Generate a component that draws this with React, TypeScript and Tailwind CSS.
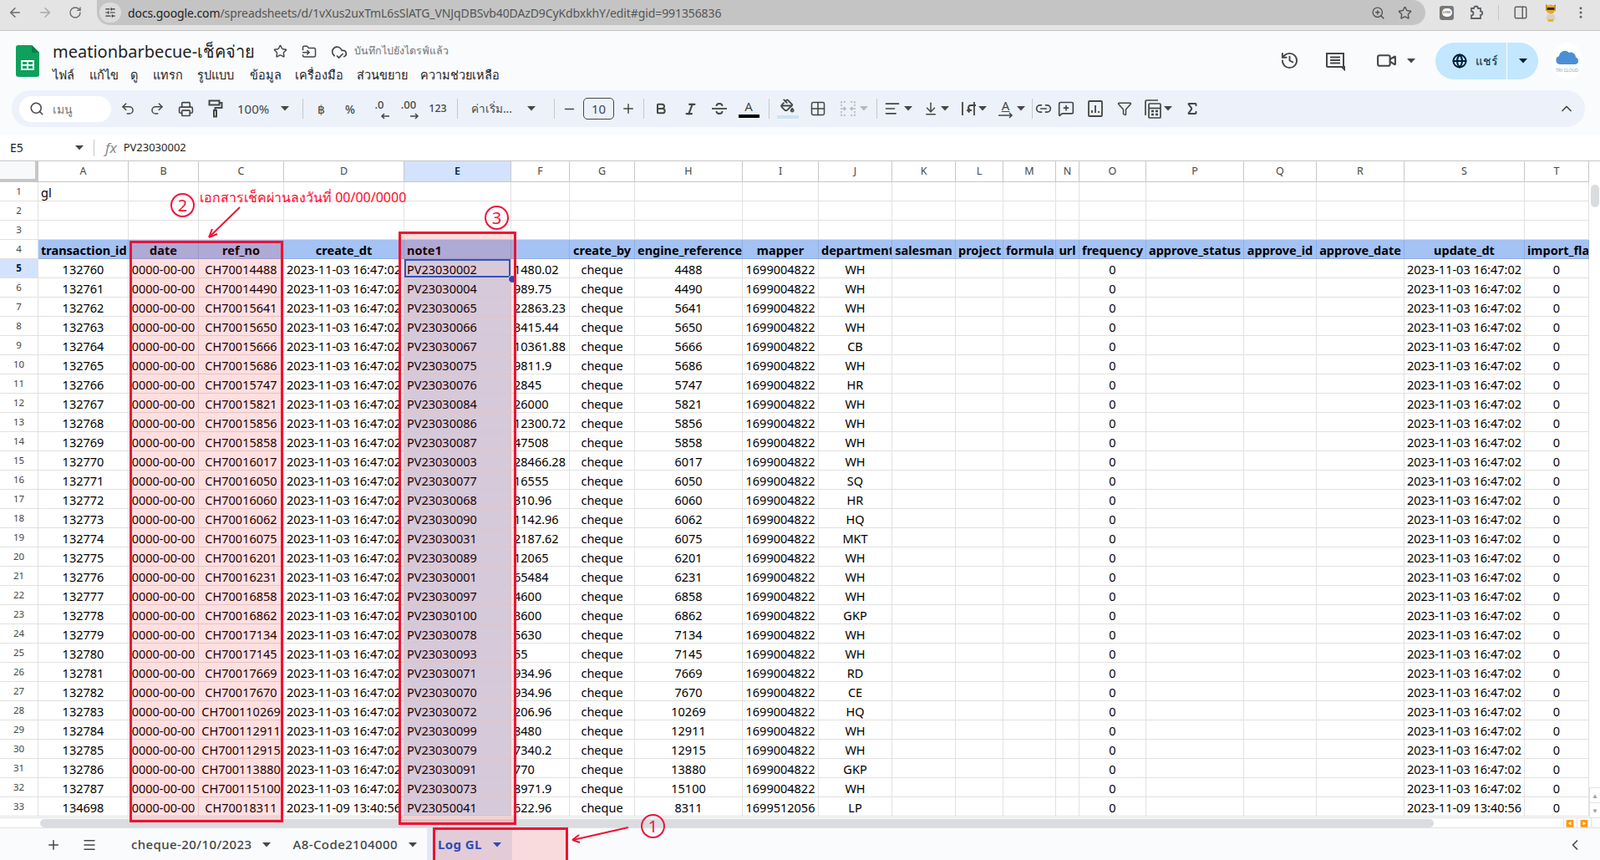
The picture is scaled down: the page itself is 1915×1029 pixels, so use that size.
import type { ReactNode } from 'react'
import {
  ArrowLeft, ArrowRight, RotateCw, SlidersHorizontal, ZoomIn, Star, PanelRight, MoreVertical,
  Search, Undo2, Redo2, Printer, Bold, Italic, PaintBucket, Grid2x2, AlignLeft, ArrowDownToLine,
  Link2, MessageSquarePlus, Filter, Sigma, ChevronUp, ChevronLeft, Minus, Plus, Menu, History,
  FolderInput, CloudCheck, Video, Globe,
} from 'lucide-react'

const columns = ['A','B','C','D','E','F','G','H','I','J','K','L','M','N','O','P','Q','R','S','T']

const headers = ['transaction_id','date','ref_no','create_dt','note1','','create_by','engine_reference','mapper','department','salesman','project','formula','url','frequency','approve_status','approve_id','approve_date','update_dt','import_fla']

// id ref note amount engine dept
const raw = `132760 CH70014488 PV23030002 1480.02 4488 WH
132761 CH70014490 PV23030004 989.75 4490 WH
132762 CH70015641 PV23030065 22863.23 5641 WH
132763 CH70015650 PV23030066 3415.44 5650 WH
132764 CH70015666 PV23030067 10361.88 5666 CB
132765 CH70015686 PV23030075 9811.9 5686 WH
132766 CH70015747 PV23030076 2845 5747 HR
132767 CH70015821 PV23030084 26000 5821 WH
132768 CH70015856 PV23030086 12300.72 5856 WH
132769 CH70015858 PV23030087 47508 5858 WH
132770 CH70016017 PV23030003 28466.28 6017 WH
132771 CH70016050 PV23030077 16555 6050 SQ
132772 CH70016060 PV23030068 310.96 6060 HR
132773 CH70016062 PV23030090 1142.96 6062 HQ
132774 CH70016075 PV23030031 2187.62 6075 MKT
132775 CH70016201 PV23030089 12065 6201 WH
132776 CH70016231 PV23030001 65484 6231 WH
132777 CH70016858 PV23030097 4600 6858 WH
132778 CH70016862 PV23030100 3600 6862 GKP
132779 CH70017134 PV23030078 5630 7134 WH
132780 CH70017145 PV23030093 55 7145 WH
132781 CH70017669 PV23030071 934.96 7669 RD
132782 CH70017670 PV23030070 934.96 7670 CE
132783 CH700110269 PV23030072 206.96 10269 HQ
132784 CH700112911 PV23030099 8480 12911 WH
132785 CH700112915 PV23030079 7340.2 12915 WH
132786 CH700113880 PV23030091 770 13880 GKP
132787 CH700115100 PV23030073 8971.9 15100 WH
134698 CH70018311 PV23050041 622.96 8311 LP`

const rows = raw.split('\n').map((line) => {
  const [id, ref, note, amount, engine, dept] = line.split(' ')
  const last = id === '134698'
  const stamp = last ? '2023-11-09 13:40:56' : '2023-11-03 16:47:02'
  return [id, '0000-00-00', ref, stamp, note, amount, 'cheque', engine, last ? '1699512056' : '1699004822', dept, '', '', '', '', '0', '', '', '', stamp, '0']
})

function Caret({ className = 'text-[#444746]' }: { className?: string }) {
  return (
    <svg width="10" height="6" viewBox="0 0 10 6" className={className}>
      <path d="M0 0h10L5 5.5z" fill="currentColor" />
    </svg>
  )
}

function Btn({ children, className = 'w-[35px]' }: { children: ReactNode; className?: string }) {
  return <div className={`flex h-full shrink-0 items-center justify-center text-[#444746] ${className}`}>{children}</div>
}

function Sep({ className = '' }: { className?: string }) {
  return <div className={`h-[24px] w-px shrink-0 bg-[#c7c7c7] ${className}`} />
}

function SheetsLogo() {
  return (
    <svg width="28" height="38" viewBox="0 0 28 38">
      <path d="M3 0h16l9 9v26a3 3 0 0 1-3 3H3a3 3 0 0 1-3-3V3a3 3 0 0 1 3-3z" fill="#0fa05c" />
      <path d="M19 0l9 9h-9z" fill="#0a7d45" />
      <path d="M6 18h16v12H6z M8 20v3h5v-3z M15 20v3h5v-3z M8 25v3h5v-3z M15 25v3h5v-3z" fill="#fff" fillRule="evenodd" />
    </svg>
  )
}

function Roller() {
  return (
    <svg width="18" height="22" viewBox="0 0 18 22" fill="none" stroke="currentColor" strokeWidth="2">
      <path d="M1.5 1.500h12v5h-12z" />
      <path d="M13.500 4h3v6h-8v3" />
      <path d="M7 13h3v7.500H7z" />
    </svg>
  )
}

function ZeroArrow({ label, dir }: { label: string; dir: 'l' | 'r' }) {
  return (
    <div className="relative flex h-[26px] w-[26px] flex-col items-center font-['Roboto',sans-serif] text-[13px] leading-[17px] font-medium">
      <span>{label}</span>
      <svg width="12" height="8" viewBox="0 0 12 8" className="absolute bottom-0 right-0" fill="none" stroke="currentColor" strokeWidth="1.500">
        {dir === 'l' ? <path d="M11 4H2M5 1 2 4l3 3" /> : <path d="M1 4h9M7 1l3 3-3 3" />}
      </svg>
    </div>
  )
}

function Strike() {
  return (
    <svg width="20" height="20" viewBox="0 0 20 20" fill="none" stroke="currentColor" strokeWidth="1.800">
      <path d="M1 10h18" />
      <path d="M6.500 7c0-2 1.500-3 3.500-3s3.500 1 3.500 3" />
      <path d="M6.500 13c0 2 1.500 3 3.500 3s3.500-1 3.500-3" />
    </svg>
  )
}

function MergeIcon() {
  return (
    <svg width="20" height="20" viewBox="0 0 20 20" fill="none" stroke="#b4b8bd" strokeWidth="1.600">
      <path d="M7 2H2v5M13 2h5v5M7 18H2v-5M13 18h5v-5" strokeDasharray="2.500 1.500" />
      <path d="M1 10h6M5 8l2 2-2 2M19 10h-6M15 8l-2 2 2 2" />
    </svg>
  )
}

function WrapIcon() {
  return (
    <svg width="18" height="20" viewBox="0 0 18 20" fill="none" stroke="currentColor" strokeWidth="1.800">
      <path d="M2 2v16M16 2v16" />
      <path d="M16 7h-6a3 3 0 0 0 0 6h1M8.500 10.500l-2.500 2.500 2.500 2.500" transform="translate(2 -1)" />
    </svg>
  )
}

function RotateIcon() {
  return (
    <div className="relative h-[24px] w-[20px] font-['Roboto',sans-serif] text-[15px] leading-[16px]">
      <span className="block text-center underline underline-offset-1">A</span>
      <svg width="20" height="8" viewBox="0 0 20 8" className="absolute bottom-0 left-0" fill="none" stroke="currentColor" strokeWidth="1.600">
        <path d="M1 4h16M14 1l3 3-3 3" />
      </svg>
    </div>
  )
}

function ChartIcon() {
  return (
    <svg width="18" height="20" viewBox="0 0 18 20" fill="none" stroke="currentColor" strokeWidth="1.800">
      <rect x="1" y="1" width="16" height="18" rx="1" />
      <path d="M5 15v-3M9 15V6M13 15v-2" />
    </svg>
  )
}

function CalcIcon() {
  return (
    <svg width="20" height="23" viewBox="0 0 20 23" fill="none" stroke="currentColor" strokeWidth="1.700">
      <path d="M1 19V2.500A1.500 1.500 0 0 1 2.500 1H16" />
      <rect x="5" y="5" width="14" height="17" rx="1" />
      <path d="M5 10.500h14" />
      <path d="M8 14h3M13 14h3M8 18h3M13 18h3" strokeWidth="2.400" />
    </svg>
  )
}

function LineApp() {
  return (
    <div className="flex h-[17px] w-[17px] items-center justify-center rounded-[3px] bg-[#777]">
      <div className="flex h-[10px] w-[12px] items-center justify-center rounded-[5px] bg-white text-[4px] leading-none font-bold text-[#777]">LINE</div>
    </div>
  )
}

function Puzzle() {
  return (
    <svg width="18" height="20" viewBox="0 0 18 20" fill="none" stroke="#5f6368" strokeWidth="1.800">
      <path d="M3 5h3a2.500 2.500 0 0 1 5 0h3v3.500a2.200 2.200 0 0 1 0 4.500V17H3v-3.500a2.200 2.200 0 0 0 0-5z" />
    </svg>
  )
}

function Mascot() {
  return (
    <svg width="18" height="24" viewBox="0 0 18 24">
      <path d="M3 2l3 2h6l3-2v8H3z" fill="#c78a1e" />
      <circle cx="9" cy="8" r="5.500" fill="#e0a93a" />
      <rect x="4.500" y="6" width="9" height="3" fill="#3c2c20" />
      <path d="M5 14h8l2 6H3z" fill="#d9d2c0" />
      <path d="M5 20h8l-1 3H6z" fill="#e7b52a" />
    </svg>
  )
}

function TriCloud() {
  return (
    <div className="flex h-[44px] w-[36px] items-center justify-center rounded-full bg-white">
      <svg width="30" height="32" viewBox="0 0 30 32">
        <path d="M6 20a5 5 0 0 1-1-9.800A7 7 0 0 1 17 6a6 6 0 0 1 8 5.500A4.500 4.500 0 0 1 25 20z" fill="#4a8fd6" />
        <text x="1" y="29" fontSize="5" fill="#8a9fb8" fontFamily="Liberation Sans">TRI CLOUD</text>
      </svg>
    </div>
  )
}

function Annotation({ n, className }: { n: number; className: string }) {
  return (
    <div className={`absolute flex h-[29px] w-[29px] items-center justify-center rounded-full border-2 border-[#f0143c] font-['Roboto',sans-serif] text-[20px] leading-none text-[#f0143c] ${className}`}>
      {n}
    </div>
  )
}

function ChromeBar() {
  return (
    <div className="flex h-[37px] items-start border-b border-[#c4c4c4] bg-[#e4e4e4] pt-0">
      <div className="flex h-[30px] w-[116px] items-center text-[#6b6b6b]">
        <ArrowLeft size={18} className="ml-[9px]" />
        <ArrowRight size={18} className="ml-[18px] text-[#a9a9a9]" />
        <RotateCw size={16} className="ml-[19px]" />
      </div>
      <div className="flex h-[30px] w-[1590px] items-center rounded-r-[15px] rounded-bl-[15px] bg-[#c4c4c4]">
        <div className="ml-[3px] flex h-[24px] w-[26px] items-center justify-center rounded-full bg-[#dcdcdc]">
          <SlidersHorizontal size={14} className="text-[#333]" />
        </div>
        <div className="ml-[8px] font-['Noto_Sans',sans-serif] text-[14px] tracking-[-0.1px] whitespace-nowrap text-[#555]">
          <span className="text-[#222]">docs.google.com</span>/spreadsheets/d/1vXus2uxTmL6sSlATG_VNJqDBSvb40DAzD9CyKdbxkhY/edit#gid=991356836
        </div>
        <div className="ml-auto flex items-center text-[#555]">
          <ZoomIn size={17} />
          <Star size={17} className="mr-[16px] ml-[15px]" />
        </div>
      </div>
      <div className="flex h-[30px] flex-1 items-center">
        <div className="ml-[17px]"><LineApp /></div>
        <div className="ml-[18px]"><Puzzle /></div>
        <div className="ml-[17px] h-[18px] w-px bg-[#c8c8c8]" />
        <PanelRight size={18} className="ml-[17px] text-[#5f6368]" />
        <div className="ml-[18px]"><Mascot /></div>
        <MoreVertical size={18} className="ml-[18px] text-[#5f6368]" />
      </div>
    </div>
  )
}

function AppHeader() {
  const menu = [
    ['ไฟล์', 'w-[44px]'], ['แก้ไข', 'w-[49px]'], ['ดู', 'w-[27px]'], ['แทรก', 'w-[53px]'], ['รูปแบบ', 'w-[63px]'],
    ['ข้อมูล', 'w-[54px]'], ['เครื่องมือ', 'w-[74px]'], ['ส่วนขยาย', 'w-[76px]'], ['ความช่วยเหลือ', 'w-[100px]'],
  ]
  return (
    <div className="flex h-[71px] bg-[#f9fbfd]">
      <div className="mt-[17px] ml-[19px]"><SheetsLogo /></div>
      <div className="ml-[16px] flex flex-col">
        <div className="mt-[11px] flex h-[27px] items-center">
          <span className="font-['Noto_Sans',sans-serif] text-[20px] leading-none whitespace-nowrap text-[#1f1f1f]">meationbarbecue-เช็คจ่าย</span>
          <Star size={17} className="ml-[22px] text-[#444746]" />
          <FolderInput size={18} className="ml-[17px] text-[#444746]" />
          <CloudCheck size={20} className="ml-[17px] text-[#444746]" />
          <span className="ml-[8px] font-['Noto_Sans',sans-serif] text-[12.500px] whitespace-nowrap text-[#757575]">บันทึกไปยังไดรฟ์แล้ว</span>
        </div>
        <div className="mt-[4px] flex h-[22px] items-center font-['Noto_Sans',sans-serif] text-[14.500px] whitespace-nowrap text-[#1f1f1f]">
          {menu.map(([label, width]) => (
            <span key={label} className={`shrink-0 ${width}`}>{label}</span>
          ))}
        </div>
      </div>
      <div className="ml-auto flex items-center">
        <History size={23} className="text-[#444746]" />
        <svg width="24" height="24" viewBox="0 0 24 24" className="ml-[31px] text-[#444746]" fill="none" stroke="currentColor" strokeWidth="2">
          <path d="M2 3h20v16h1v3l-3-3H3a1 1 0 0 1-1-1z" />
          <path d="M6 7.500h12M6 11h12M6 14.500h12" />
        </svg>
        <Video size={25} className="ml-[37px] text-[#444746]" />
        <Caret className="ml-[12px] text-[#444746]" />
        <div className="ml-[24px] flex h-[44px] w-[123px] items-center rounded-full bg-[#c2e7ff] text-[#001d35]">
          <div className="flex h-full w-[86px] items-center border-r border-white pl-[20px]">
            <Globe size={18} strokeWidth={2.600} />
            <span className="ml-[10px] font-['Noto_Sans',sans-serif] text-[14px] font-medium">แชร์</span>
          </div>
          <Caret className="ml-[14px] text-[#001d35]" />
        </div>
        <div className="mr-[21px] ml-[17px]"><TriCloud /></div>
      </div>
    </div>
  )
}

function Toolbar() {
  return (
    <div className="bg-[#f9fbfd] pb-[9px] pl-[14px] pr-[18px]">
      <div className="flex h-[44px] items-center rounded-full bg-[#edf2fa] pr-[12px] pl-[9px]">
        <div className="flex h-[31px] w-[110px] shrink-0 items-center rounded-full bg-white pl-[12px]">
          <Search size={18} className="text-[#444746]" />
          <span className="ml-[10px] font-['Noto_Sans',sans-serif] text-[14px] text-[#757575]">เมนู</span>
        </div>
        <div className="ml-[2px] flex h-full items-center">
          <Btn><Undo2 size={18} /></Btn>
          <Btn><Redo2 size={18} /></Btn>
          <Btn><Printer size={19} /></Btn>
          <Btn><Roller /></Btn>
        </div>
        <div className="flex w-[80px] items-center pl-[9px] text-[#444746]">
          <span className="font-['Roboto',sans-serif] text-[15px]">100%</span>
          <Caret className="ml-[14px] text-[#444746]" />
        </div>
        <Sep className="ml-[7px]" />
        <div className="ml-[3.500px] flex h-full items-center font-['Roboto',sans-serif] text-[#444746]">
          <Btn><span className="font-['Noto_Sans',sans-serif] text-[14px] font-medium">฿</span></Btn>
          <Btn><span className="text-[14px] font-medium">%</span></Btn>
          <Btn><ZeroArrow label=".0" dir="l" /></Btn>
          <Btn><ZeroArrow label=".00" dir="r" /></Btn>
          <Btn><span className="text-[12.500px] font-medium">123</span></Btn>
        </div>
        <Sep className="ml-[5.500px]" />
        <div className="flex w-[115px] shrink-0 items-center pl-[16px] text-[#444746]">
          <span className="font-['Noto_Sans',sans-serif] text-[13.500px] whitespace-nowrap">ค่าเริ่ม...</span>
          <Caret className="ml-[18px] text-[#444746]" />
        </div>
        <Sep />
        <Btn className="w-[34px]"><Minus size={17} /></Btn>
        <div className="flex h-[26px] w-[37px] shrink-0 items-center justify-center rounded-[5px] border border-[#444746] font-['Roboto',sans-serif] text-[15px] text-[#444746]">10</div>
        <Btn className="w-[33px]"><Plus size={18} /></Btn>
        <Sep className="ml-[2px]" />
        <div className="ml-[2.500px] flex h-full items-center">
          <Btn><Bold size={16} strokeWidth={3} /></Btn>
          <Btn><Italic size={17} strokeWidth={3} /></Btn>
          <Btn><Strike /></Btn>
          <Btn>
            <div className="flex flex-col items-center">
              <span className="font-['Roboto',sans-serif] text-[15px] leading-[17px]">A</span>
              <div className="mt-[1px] h-[4px] w-[25px] bg-black" />
            </div>
          </Btn>
        </div>
        <Sep className="ml-[6px]" />
        <Btn className="ml-[4px] w-[36px]">
          <div className="flex flex-col items-center">
            <PaintBucket size={17} strokeWidth={2.600} />
            <div className="mt-[3px] h-[4px] w-[26px] bg-[#cfe2f3]" />
          </div>
        </Btn>
        <Btn className="w-[36px]"><Grid2x2 size={20} strokeWidth={1.800} /></Btn>
        <Btn className="ml-[1px] w-[49px] gap-[4px] text-[#b4b8bd]"><MergeIcon /><Caret className="text-[#b4b8bd]" /></Btn>
        <Sep className="ml-[2px]" />
        <Btn className="ml-[2px] w-[46px] gap-[4px]"><AlignLeft size={20} /><Caret /></Btn>
        <Btn className="w-[45px] gap-[3px]"><ArrowDownToLine size={18} /><Caret /></Btn>
        <Btn className="w-[45px] gap-[3px]"><WrapIcon /><Caret /></Btn>
        <Btn className="w-[45px] gap-[3px]"><RotateIcon /><Caret /></Btn>
        <Sep className="ml-[2px]" />
        <Btn className="ml-[3px]"><Link2 size={20} /></Btn>
        <Btn><MessageSquarePlus size={20} /></Btn>
        <Btn><ChartIcon /></Btn>
        <Btn><Filter size={18} /></Btn>
        <Btn className="w-[45px] gap-[3px]"><CalcIcon /><Caret /></Btn>
        <Btn className="w-[36px]"><Sigma size={18} strokeWidth={2.600} /></Btn>
        <Btn className="ml-auto"><ChevronUp size={20} /></Btn>
      </div>
    </div>
  )
}

function FormulaBar() {
  return (
    <div className="flex h-[32px] items-center border-b border-[#c7c7c7] bg-white">
      <span className="ml-[12px] w-[78px] font-['Noto_Sans',sans-serif] text-[14px] text-[#1f1f1f]">E5</span>
      <Caret className="text-[#444746]" />
      <div className="ml-[12px] h-[20px] w-px bg-[#c7c7c7]" />
      <span className="ml-[13px] font-['Liberation_Serif',serif] text-[17px] text-[#8a8a8a] italic">fx</span>
      <span className="ml-[8px] font-['Roboto',sans-serif] text-[13px] text-[#1f1f1f]">PV23030002</span>
    </div>
  )
}

function SheetGrid() {
  const labelCls = "flex items-center justify-center border-r border-b font-['Roboto',sans-serif]"
  return (
    <div className="grid w-[1902px] shrink-0 grid-cols-[46px_108px_84px_102px_144px_128px_70px_78px_129px_91px_88px_76px_57px_63px_28px_80px_117px_87px_105px_144px_77px] auto-rows-[23px] font-['Liberation_Sans',sans-serif] text-[14.500px] text-black">
      <div className="row-auto h-[25px] border-r-4 border-b-4 border-[#c7c7c7] bg-[#f8f9fa]" />
      {columns.map((c) => (
        <div
          key={c}
          className={`${labelCls} h-[25px] border-[#c7c7c7] text-[12.500px] ${c === 'E' ? 'bg-[#d3e3fd] font-semibold text-[#041e49]' : 'bg-white text-[#444746]'}`}
        >
          {c}
        </div>
      ))}

      {[1, 2, 3].map((n) => (
        <div key={n} className="contents">
          <div className={`${labelCls} mt-[2px] h-[23px] border-[#e1e1e1] text-[11.500px] text-[#444746]`}>{n}</div>
          {columns.map((c, i) => (
            <div key={c} className={`mt-[2px] h-[23px] overflow-hidden border-r border-b border-[#e1e1e1] bg-white px-[3px] leading-[24px] whitespace-nowrap ${i === 4 ? 'bg-white' : ''}`}>
              {n === 1 && i === 0 ? 'gl' : ''}
            </div>
          ))}
        </div>
      ))}

      <div className={`${labelCls} mt-[2px] h-[23px] border-[#e1e1e1] text-[11.500px] text-[#444746]`}>4</div>
      {headers.map((h, i) => (
        <div key={i} className={`mt-[2px] h-[23px] overflow-hidden border-r border-b border-[#8fb0e6] bg-[#a4c2f4] px-[3px] leading-[24px] font-bold whitespace-nowrap ${i === 4 ? 'text-left' : 'text-center'}`}>
          {h}
        </div>
      ))}

      {rows.map((row, r) => (
        <div key={r} className="contents">
          <div className={`${labelCls} mt-[2px] h-[23px] border-[#e1e1e1] text-[11.500px] ${r === 0 ? 'bg-[#d3e3fd] font-bold text-[#041e49]' : 'text-[#444746]'}`}>{r + 5}</div>
          {row.map((v, i) => (
            <div
              key={i}
              className={`relative mt-[2px] h-[23px] overflow-hidden border-r border-b border-[#e1e1e1] px-[3px] leading-[24px] whitespace-nowrap ${i === 4 ? 'bg-[#cfe6fa] text-left' : i === 5 ? 'bg-white text-left' : 'bg-white text-center'}`}
            >
              {v}
              {r === 0 && i === 4 && <div className="absolute inset-0 border-2 border-[#1a5fd0]" />}
            </div>
          ))}
        </div>
      ))}
    </div>
  )
}

function VerticalScroll() {
  return (
    <div className="flex h-[785px] w-[13px] flex-col bg-white pt-[28px]">
      <div className="ml-[2px] h-[27px] w-[10px] rounded-full bg-[#dadce0]" />
      <div className="mt-auto flex h-[18px] items-center justify-center border-t border-l border-[#e1e1e1] text-[8px] text-[#9aa0a6]">▲</div>
      <div className="flex h-[18px] items-center justify-center border-t border-l border-[#e1e1e1] text-[8px] text-[#9aa0a6]">▼</div>
    </div>
  )
}

function HorizontalScroll() {
  return (
    <div className="flex h-[12px] items-center border-t border-[#e1e1e1] bg-white">
      <div className="ml-[48px] h-[10px] w-[1668px] rounded-full bg-[#dadce0]" />
      <div className="ml-auto flex h-full text-[8px] text-[#9aa0a6]">
        <div className="flex w-[16px] items-center justify-center border-l border-[#e1e1e1]">◀</div>
        <div className="flex w-[17px] items-center justify-center border-l border-[#e1e1e1]">▶</div>
        <div className="w-[11px] border-l border-[#e1e1e1]" />
      </div>
    </div>
  )
}

function SheetTabs() {
  return (
    <div className="flex h-[40px] items-center border-t border-[#e1e1e1] bg-[#f9fbfd] font-['Roboto',sans-serif] text-[15px] font-medium tracking-[0.4px] text-[#444746]">
      <Plus size={18} className="ml-[55px]" />
      <Menu size={18} className="ml-[25px]" />
      <span className="ml-[41px]">cheque-20/10/2023</span>
      <Caret className="ml-[12px] text-[#444746]" />
      <span className="ml-[27px]">A8-Code2104000</span>
      <Caret className="ml-[13px] text-[#444746]" />
      <div className="ml-[12px] flex h-full w-[102px] items-center bg-[#e1e9f7] pl-[13px] font-bold text-[#0b57d0]">
        Log GL
        <Caret className="ml-[13px] text-[#0b57d0]" />
      </div>
      <ChevronLeft size={20} className="mr-[20px] ml-auto" />
    </div>
  )
}

export default function App() {
  return (
    <div className="relative h-[1029px] w-[1915px] overflow-hidden bg-white">
      <ChromeBar />
      <AppHeader />
      <Toolbar />
      <FormulaBar />
      <div className="flex">
        <SheetGrid />
        <VerticalScroll />
      </div>
      <HorizontalScroll />
      <SheetTabs />

      {/* fill handle */}
      <div className="absolute top-[329px] left-[608px] h-[10px] w-[10px] rounded-full border border-white bg-[#1f4fc0]" />

      {/* red review marks drawn over the sheet */}
      <div className="absolute top-[288px] left-[155px] h-[696px] w-[184px] border-[3px] border-[#ee1133] bg-[#ff000020]" />
      <div className="absolute top-[277px] left-[477px] h-[710px] w-[141px] border-[3px] border-[#ee1133] bg-[#ff000020]" />
      <div className="absolute top-[990px] left-[518px] h-[50px] w-[162px] border-[3px] border-[#ee1133] bg-[#ff000020]" />
      <Annotation n={2} className="top-[231px] left-[204px]" />
      <Annotation n={3} className="top-[246px] left-[580px]" />
      <Annotation n={1} className="top-[974px] left-[767px]" />
      <div className="absolute top-[224px] left-[239px] font-['Noto_Sans',sans-serif] text-[16px] whitespace-nowrap text-[#ff0a2a]">เอกสารเช็คผ่านลงวันที่ 00/00/0000</div>
      <svg width="1915" height="1029" className="pointer-events-none absolute top-0 left-0" fill="none" stroke="#ee1133" strokeWidth="2">
        <path d="M287 248 251 283" />
        <path d="M250 284l4-10M250 284l10-4" />
        <path d="M752 990 686 1005" />
        <path d="M685 1005l8-6M685 1005l9 3" />
      </svg>
    </div>
  )
}
